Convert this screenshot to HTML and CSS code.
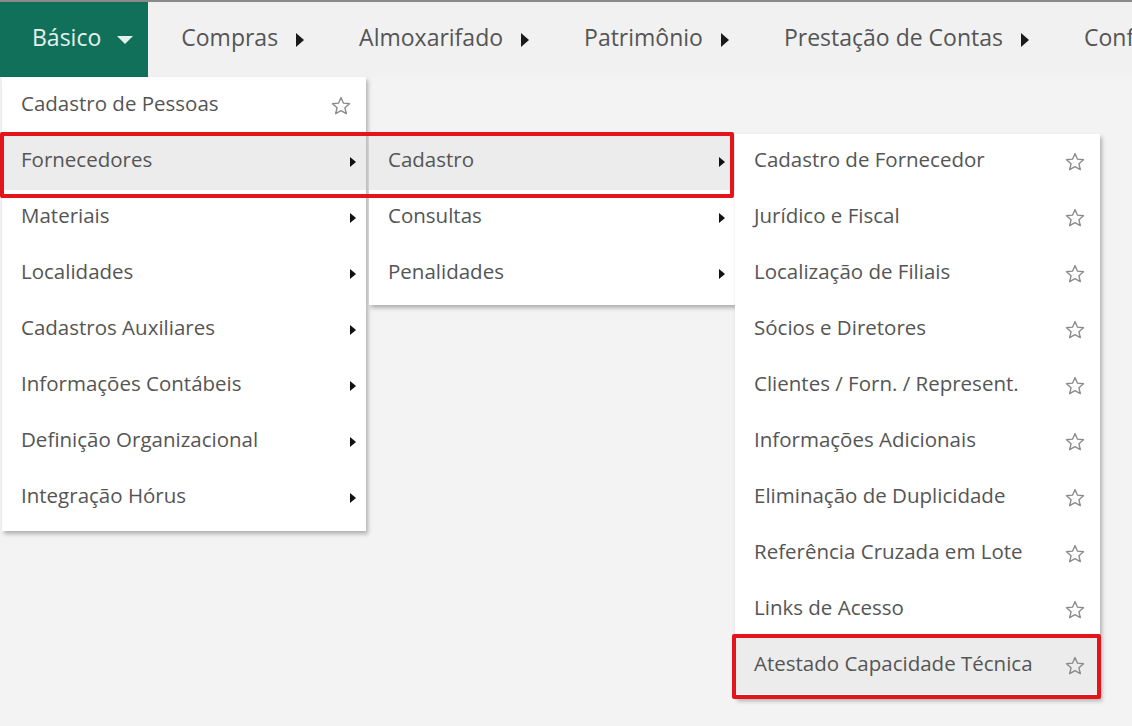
FILE: index.html
```html
<!DOCTYPE html>
<html lang="pt-BR">
<head>
<meta charset="utf-8">
<title>Menu</title>
<link rel="stylesheet" href="styles.css">
</head>
<body>
<nav class="topbar">
  <div class="nav-item active">
    <span class="nav-label">Básico</span><span class="caret-down"></span>
    <ul class="menu menu-1">
      <li class="mi"><span>Cadastro de Pessoas</span><svg class="star" viewBox="0 0 24 24"><path d="M12 2.8l2.7 6.1 6.6.6-5 4.4 1.5 6.5L12 17l-5.8 3.4 1.5-6.5-5-4.4 6.6-.6z"/></svg></li>
      <li class="mi hl"><span>Fornecedores</span><i class="arr"></i>
        <ul class="menu menu-2">
          <li class="mi hl"><span>Cadastro</span><i class="arr"></i>
            <ul class="menu menu-3">
              <li class="mi"><span>Cadastro de Fornecedor</span><svg class="star" viewBox="0 0 24 24"><path d="M12 2.8l2.7 6.1 6.6.6-5 4.4 1.5 6.5L12 17l-5.8 3.4 1.5-6.5-5-4.4 6.6-.6z"/></svg></li>
              <li class="mi"><span>Jurídico e Fiscal</span><svg class="star" viewBox="0 0 24 24"><path d="M12 2.8l2.7 6.1 6.6.6-5 4.4 1.5 6.5L12 17l-5.8 3.4 1.5-6.5-5-4.4 6.6-.6z"/></svg></li>
              <li class="mi"><span>Localização de Filiais</span><svg class="star" viewBox="0 0 24 24"><path d="M12 2.8l2.7 6.1 6.6.6-5 4.4 1.5 6.5L12 17l-5.8 3.4 1.5-6.5-5-4.4 6.6-.6z"/></svg></li>
              <li class="mi"><span>Sócios e Diretores</span><svg class="star" viewBox="0 0 24 24"><path d="M12 2.8l2.7 6.1 6.6.6-5 4.4 1.5 6.5L12 17l-5.8 3.4 1.5-6.5-5-4.4 6.6-.6z"/></svg></li>
              <li class="mi"><span>Clientes / Forn. / Represent.</span><svg class="star" viewBox="0 0 24 24"><path d="M12 2.8l2.7 6.1 6.6.6-5 4.4 1.5 6.5L12 17l-5.8 3.4 1.5-6.5-5-4.4 6.6-.6z"/></svg></li>
              <li class="mi"><span>Informações Adicionais</span><svg class="star" viewBox="0 0 24 24"><path d="M12 2.8l2.7 6.1 6.6.6-5 4.4 1.5 6.5L12 17l-5.8 3.4 1.5-6.5-5-4.4 6.6-.6z"/></svg></li>
              <li class="mi"><span>Eliminação de Duplicidade</span><svg class="star" viewBox="0 0 24 24"><path d="M12 2.8l2.7 6.1 6.6.6-5 4.4 1.5 6.5L12 17l-5.8 3.4 1.5-6.5-5-4.4 6.6-.6z"/></svg></li>
              <li class="mi"><span>Referência Cruzada em Lote</span><svg class="star" viewBox="0 0 24 24"><path d="M12 2.8l2.7 6.1 6.6.6-5 4.4 1.5 6.5L12 17l-5.8 3.4 1.5-6.5-5-4.4 6.6-.6z"/></svg></li>
              <li class="mi"><span>Links de Acesso</span><svg class="star" viewBox="0 0 24 24"><path d="M12 2.8l2.7 6.1 6.6.6-5 4.4 1.5 6.5L12 17l-5.8 3.4 1.5-6.5-5-4.4 6.6-.6z"/></svg></li>
              <li class="mi hl"><span>Atestado Capacidade Técnica</span><svg class="star" viewBox="0 0 24 24"><path d="M12 2.8l2.7 6.1 6.6.6-5 4.4 1.5 6.5L12 17l-5.8 3.4 1.5-6.5-5-4.4 6.6-.6z"/></svg>
                <span class="redbox redbox-2"></span>
              </li>
            </ul>
          </li>
          <li class="mi"><span>Consultas</span><i class="arr"></i></li>
          <li class="mi"><span>Penalidades</span><i class="arr"></i></li>
        </ul>
        <span class="redbox redbox-1"></span>
      </li>
      <li class="mi"><span>Materiais</span><i class="arr"></i></li>
      <li class="mi"><span>Localidades</span><i class="arr"></i></li>
      <li class="mi"><span>Cadastros Auxiliares</span><i class="arr"></i></li>
      <li class="mi"><span>Informações Contábeis</span><i class="arr"></i></li>
      <li class="mi"><span>Definição Organizacional</span><i class="arr"></i></li>
      <li class="mi"><span>Integração Hórus</span><i class="arr"></i></li>
    </ul>
  </div>
  <div class="nav-item"><span class="nav-label">Compras</span><span class="caret-right"></span></div>
  <div class="nav-item"><span class="nav-label">Almoxarifado</span><span class="caret-right"></span></div>
  <div class="nav-item"><span class="nav-label">Patrimônio</span><span class="caret-right"></span></div>
  <div class="nav-item"><span class="nav-label">Prestação de Contas</span><span class="caret-right"></span></div>
  <div class="nav-item"><span class="nav-label">Configurações</span><span class="caret-right"></span></div>
</nav>
</body>
</html>
```
FILE: styles.css
```css
html, body {
  margin: 0;
  padding: 0;
  height: 100%;
  overflow: hidden;
}
body {
  background: #f3f3f3;
  font-family: "Open Sans", "DejaVu Sans", sans-serif;
  color: #555;
  border-top: 2px solid #8a8a8a;
  box-sizing: border-box;
}
.topbar {
  display: flex;
  height: 75px;
  background: #f1f1f1;
  white-space: nowrap;
}
.nav-item {
  position: relative;
  display: flex;
  align-items: center;
  flex-shrink: 0;
  padding: 0 22px 0 33px;
  font-size: 23px;
  color: #555;
}
.nav-item.active {
  background: #11705a;
  color: #e4f1ec;
  padding: 0 15px 0 32px;
}
.nav-label {
  margin-top: -5px;
}
.caret-down {
  width: 0;
  height: 0;
  margin-left: 16px;
  border-left: 8px solid transparent;
  border-right: 8px solid transparent;
  border-top: 8px solid #e4f1ec;
}
.caret-right {
  width: 0;
  height: 0;
  margin-left: 18px;
  border-top: 7px solid transparent;
  border-bottom: 7px solid transparent;
  border-left: 8px solid #1a1a1a;
}
.menu {
  list-style: none;
  margin: 0;
  padding: 0 0 5px;
  background: #fff;
  position: absolute;
  width: 365px;
  box-shadow: 2px 3px 4px rgba(0,0,0,0.28);
  z-index: 5;
  white-space: nowrap;
}
.menu-1 {
  top: 75px;
  left: 2px;
  width: 364px;
  padding: 1px 0 5px;
}
.menu-2 {
  top: 0;
  left: 367px;
  width: 366px;
  padding: 0 0 3px;
}
.menu-3 {
  top: 0;
  left: 366px;
  width: 365px;
  padding: 0 0 4px;
}
.mi {
  position: relative;
  display: flex;
  align-items: center;
  justify-content: space-between;
  height: 56px;
  padding: 0 14px 0 19px;
  font-size: 20.5px;
  color: #555;
}
.mi > span:first-child {
  margin-top: -6px;
}
.mi.hl {
  background: #ececec;
}
.arr {
  display: block;
  width: 0;
  height: 0;
  margin-right: -4px;
  border-top: 5px solid transparent;
  border-bottom: 5px solid transparent;
  border-left: 6px solid #111;
}
.star {
  width: 22px;
  height: 22px;
  fill: none;
  stroke: #8a8a8a;
  stroke-width: 1.5;
  stroke-linejoin: round;
}
.redbox {
  position: absolute;
  border: 4px solid #e4141b;
  border-radius: 2px;
  pointer-events: none;
  z-index: 20;
}
.redbox-1 {
  top: -2px;
  left: -2px;
  width: 726px;
  height: 58px;
}
.redbox-2 {
  top: -4px;
  left: -3px;
  width: 361px;
  height: 57px;
}
```
